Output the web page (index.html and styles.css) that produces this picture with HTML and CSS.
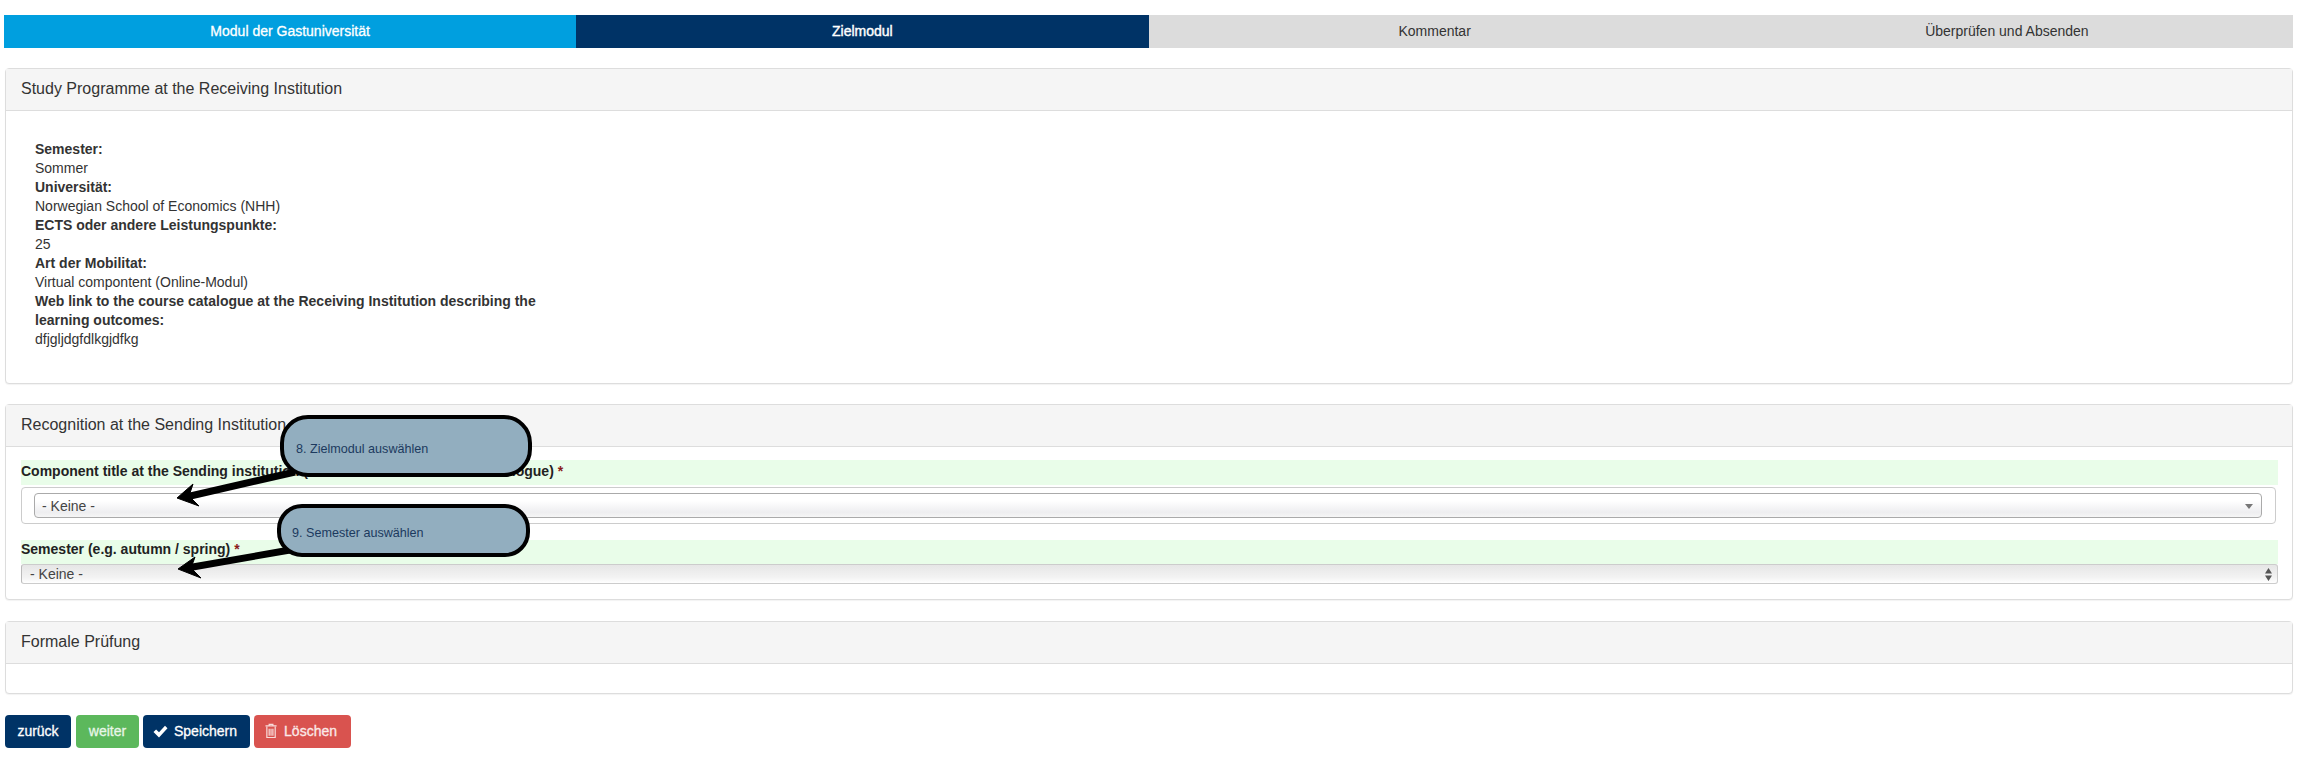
FILE: index.html
```html
<!DOCTYPE html>
<html lang="de">
<head>
<meta charset="utf-8">
<title>Zielmodul</title>
<link rel="stylesheet" href="styles.css">
</head>
<body>
<nav class="tabs">
  <div class="tab tab-done">Modul der Gastuniversität</div>
  <div class="tab tab-active">Zielmodul</div>
  <div class="tab">Kommentar</div>
  <div class="tab">Überprüfen und Absenden</div>
</nav>

<section class="panel panel-info">
  <h2 class="panel-head">Study Programme at the Receiving Institution</h2>
  <div class="info-body">
    <dl class="info-list">
      <dt>Semester:</dt><dd>Sommer</dd>
      <dt>Universität:</dt><dd>Norwegian School of Economics (NHH)</dd>
      <dt>ECTS oder andere Leistungspunkte:</dt><dd>25</dd>
      <dt>Art der Mobilitat:</dt><dd>Virtual compontent (Online-Modul)</dd>
      <dt>Web link to the course catalogue at the Receiving Institution describing the learning outcomes:</dt><dd>dfjgljdgfdlkgjdfkg</dd>
    </dl>
  </div>
</section>

<section class="panel panel-form">
  <h2 class="panel-head">Recognition at the Sending Institution</h2>
  <div class="form-body">
    <div class="field-label field-label-first">Component title at the Sending institution (as indicated in the course catalogue) <span class="req">*</span></div>
    <div class="select-well">
      <div class="select-round"><span>- Keine -</span><svg class="caret" width="8" height="5" viewBox="0 0 8 5"><path d="M0 0h8L4 5z" fill="#777"/></svg></div>
    </div>
    <div class="field-label field-label-second">Semester (e.g. autumn / spring) <span class="req">*</span></div>
    <div class="select-native"><span>- Keine -</span><svg class="updown" width="7" height="13" viewBox="0 0 7 13"><path d="M3.5 0L7 5.5H0zM0 7.5h7L3.5 13z" fill="#555"/></svg></div>
  </div>
</section>

<section class="panel panel-check">
  <h2 class="panel-head">Formale Prüfung</h2>
  <div class="check-body"></div>
</section>

<div class="actions">
  <button class="btn btn-navy btn-back">zurück</button>
  <button class="btn btn-green btn-next">weiter</button>
  <button class="btn btn-navy btn-save"><svg class="btn-icon" width="15" height="13" viewBox="0 0 15 13"><path d="M0.5 7l2.6-2.6 2.9 2.9L12 .8l2.5 2.5L6 12.4z" fill="#fff"/></svg>Speichern</button>
  <button class="btn btn-red btn-del"><svg class="btn-icon" width="13" height="16" viewBox="0 0 13 16"><path d="M4.5 2V.8h4V2M.5 2.5h12M2 3.5v11.5h9V3.5M4.5 5.5v7.5M6.5 5.5v7.5M8.5 5.5v7.5" fill="none" stroke="#f8dcda" stroke-width="1.3"/></svg>Löschen</button>
</div>

<svg class="arrows" width="2297" height="762" viewBox="0 0 2297 762">
  <path d="M295 472L186 497" stroke="#000" stroke-width="7" fill="none"/>
  <path d="M177 498L193 484 189 496 199 506z" fill="#000" stroke="#000" stroke-width="1"/>
  <path d="M290 550L187 568" stroke="#000" stroke-width="7" fill="none"/>
  <path d="M178 569L195 557 191 568 201 578z" fill="#000" stroke="#000" stroke-width="1"/>
</svg>
<div class="callout callout-8">8. Zielmodul auswählen</div>
<div class="callout callout-9">9. Semester auswählen</div>
</body>
</html>
```
FILE: styles.css
```css
* { box-sizing: border-box; }
html, body { margin: 0; padding: 0; }
body {
  position: relative;
  height: 762px;
  overflow: hidden;
  padding: 15px 4px 0 5px;
  background: #fff;
  color: #333;
  font-family: "Liberation Sans", Arial, sans-serif;
  font-size: 14px;
  line-height: 19px;
}

/* step tabs */
.tabs { display: flex; height: 33px; margin-left: -1px; }
.tab {
  flex: 1 1 0;
  display: flex;
  align-items: center;
  justify-content: center;
  background: #dcdcdc;
  color: #333;
}
.tab-done { background: #009fdf; color: #fff; -webkit-text-stroke: .3px #fff; }
.tab-active { background: #003366; color: #fff; -webkit-text-stroke: .4px #fff; }

/* panels */
.panel {
  border: 1px solid #ddd;
  border-radius: 4px;
  background: #fff;
  box-shadow: 0 1px 1px rgba(0,0,0,.05);
}
.panel-head {
  margin: 0;
  height: 42px;
  padding: 0 15px 2px;
  display: flex;
  align-items: center;
  background: #f5f5f5;
  border-bottom: 1px solid #ddd;
  color: #333;
  font-size: 16px;
  font-weight: 400;
}
.panel-info { margin-top: 20px; height: 316px; }
.panel-form { margin-top: 20px; height: 196px; }
.panel-check { margin-top: 21px; height: 73px; }

.info-body { padding: 29px 29px 0; }
.info-list { margin: 0; width: 520px; }
.info-list dt { font-weight: 700; }
.info-list dd { margin: 0; }

/* form */
.form-body { padding: 13px 14px 0 15px; }
.field-label {
  height: 25px;
  padding-bottom: 2px;
  display: flex;
  align-items: center;
  gap: 4px;
  background: #e9fde9;
  color: #222;
  font-weight: 700;
}
.field-label-second { margin-top: 16px; height: 24px; padding-bottom: 5px; }
.req { color: #8b1a1a; }
.select-well {
  margin-top: 2px;
  height: 37px;
  margin-right: 2px;
  padding: 5px 13px 0 12px;
  border: 1px solid #ccc;
  border-radius: 4px;
}
.select-round {
  height: 25px;
  padding: 1px 8px 0 7px;
  display: flex;
  align-items: center;
  justify-content: space-between;
  border: 1px solid #aaa;
  border-radius: 4px;
  background: linear-gradient(#fff 30%, #eeeef0 80%, #f6f6f6);
  color: #444;
}
.select-native {
  height: 20px;
  padding: 0 5px 0 8px;
  display: flex;
  align-items: center;
  justify-content: space-between;
  border: 1px solid #ccc;
  border-left-color: #bbb;
  border-radius: 3px;
  background: linear-gradient(#e6e6e6, #f3f3f3 70%, #fff);
  color: #444;
}

/* buttons */
.actions { display: flex; gap: 4px; margin-top: 21px; }
.btn {
  height: 33px;
  padding: 0 0 1px;
  display: flex;
  align-items: center;
  justify-content: center;
  gap: 7px;
  border: 1px solid transparent;
  border-radius: 4px;
  color: #fff;
  font: 14px "Liberation Sans", Arial, sans-serif;
  -webkit-text-stroke: .3px currentColor;
}
.btn-navy { background: #003366; }
.btn-green { background: #5cb85c; color: #e8f6e8; }
.btn-red { background: #d9534f; color: #fbe9e8; }
.btn-back { width: 66px; margin-right: 1px; }
.btn-next { width: 63px; }
.btn-save { width: 107px; padding: 0 0 1px 9px; justify-content: flex-start; gap: 6px; }
.btn-del { width: 97px; padding: 0 13px 1px 10px; }

/* tutorial annotations lying over the form */
.arrows { position: absolute; left: 0; top: 0; pointer-events: none; }
.callout {
  position: absolute;
  display: flex;
  align-items: center;
  background: #92aebf;
  border: 4px solid #000;
  color: #1c3a5e;
  font-size: 12.6px;
}
.callout-8 {
  left: 280px; top: 415px; width: 252px; height: 62px;
  padding: 6px 0 0 12px;
  border-radius: 28px;
}
.callout-9 {
  left: 277px; top: 504px; width: 253px; height: 53px;
  padding: 5px 0 0 11px;
  border-radius: 25px;
}
```
